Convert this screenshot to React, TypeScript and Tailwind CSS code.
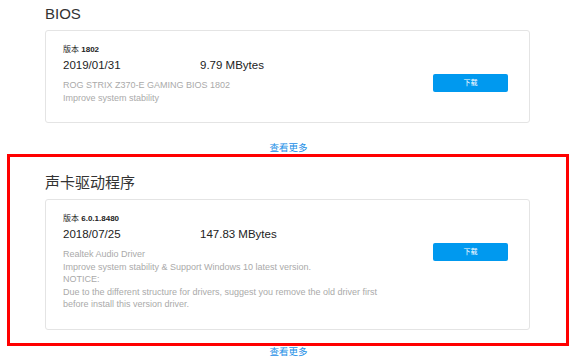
import React from 'react';

interface DriverItem {
  version: string;
  date: string;
  size: string;
  lines: string[];
}

interface SectionProps {
  title: string;
  item: DriverItem;
  highlighted?: boolean;
}

const bios: DriverItem = {
  version: '1802',
  date: '2019/01/31',
  size: '9.79 MBytes',
  lines: ['ROG STRIX Z370-E GAMING BIOS 1802', 'Improve system stability'],
};

const audio: DriverItem = {
  version: '6.0.1.8480',
  date: '2018/07/25',
  size: '147.83 MBytes',
  lines: [
    'Realtek Audio Driver',
    'Improve system stability & Support Windows 10 latest version.',
    'NOTICE:',
    'Due to the different structure for drivers, suggest you remove the old driver first',
    'before install this version driver.',
  ],
};

function DriverCard({ item }: { item: DriverItem }) {
  return (
    <div className="flex justify-between rounded-[3px] border border-[#e4e4e4] bg-white pl-[17px] pr-[21px] pt-[13px] pb-[18px]">
      <div>
        <div className="text-[8px] leading-[12px] text-[#222]">
          版本 <span className="font-bold">{item.version}</span>
        </div>
        <div className="mt-[2px] flex text-[11.5px] leading-[14px] text-[#222]">
          <span className="w-[137px]">{item.date}</span>
          <span>{item.size}</span>
        </div>
        <div className="mt-[7px] text-[9px] leading-[12.5px] text-[#aaaaaa]">
          {item.lines.map(line => (
            <div key={line}>{line}</div>
          ))}
        </div>
      </div>
      <div className="pt-[30px]">
        <button
          type="button"
          className="flex h-[18px] w-[75px] items-center justify-center rounded-[2px] bg-[#0099ef] text-[7px] text-white"
        >
          下载
        </button>
      </div>
    </div>
  );
}

function Section({ title, item, highlighted }: SectionProps) {
  return (
    <div
      className={
        highlighted
          ? 'ml-[7px] w-[562px] border-[3px] border-[#ff0000] pl-[35px] pr-[36px] pt-[16px] pb-[13px]'
          : 'ml-[7px] w-[562px] border-[3px] border-transparent pl-[35px] pr-[36px] pt-[1px] pb-[16px]'
      }
    >
      <h2 className="mb-[6px] text-[15px] leading-[20px] text-[#333]">{title}</h2>
      <DriverCard item={item} />
    </div>
  );
}

function MoreLink() {
  return (
    <div className="flex h-[12px] justify-center">
      <a href="#" className="text-[9.5px] leading-[12px] text-[#1a8ee6]">
        查看更多
      </a>
    </div>
  );
}

export default function App() {
  return (
    <div
      className="min-h-[359px] w-full bg-white"
      style={{ fontFamily: "'Liberation Sans', 'Noto Sans CJK SC', sans-serif" }}
    >
      <Section title="BIOS" item={bios} />
      <MoreLink />
      <Section title="声卡驱动程序" item={audio} highlighted />
      <MoreLink />
    </div>
  );
}
